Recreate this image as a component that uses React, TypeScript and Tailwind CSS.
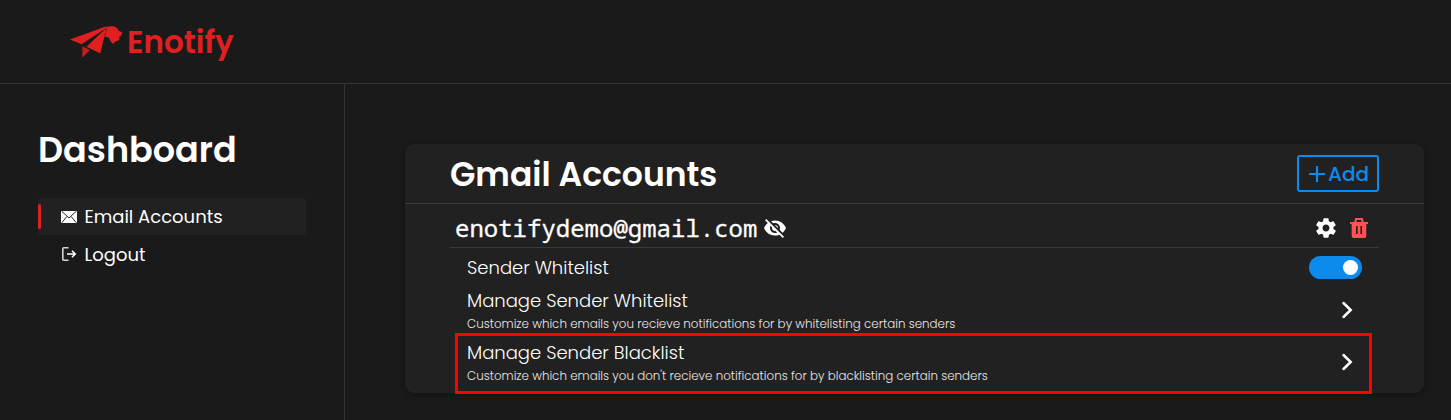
import { MdVisibilityOff } from "react-icons/md";
import { IoMdSettings } from "react-icons/io";

function Logo() {
  return (
    <svg width="53" height="33" viewBox="0 0 53 33" fill="#e02020" aria-hidden="true">
      <path d="M0 13.5 35 .8 38 1 11.5 18.3Z" />
      <path d="M12.3 20.3v11.5L19.8 24Z" opacity=".85" />
      <path d="M16.5 20.8 35 3 38 .6 44 .3 47 2 49 5 52.3 6.2 51.4 9.6 49.2 11 49.4 14 45.5 15.5 43 18 40.8 15.5 39 12 36.5 10.5 34.3 11 30.3 27.5Z" />
      <path d="m13.5 20 22.5-17.5M34.3 10.5 37 2.5" fill="none" stroke="#1a1a1a" strokeWidth=".5" />
    </svg>
  );
}

function MailIcon() {
  return (
    <svg width="16" height="12" viewBox="0 0 16 12" aria-hidden="true">
      <rect width="16" height="12" rx="1" fill="#fff" />
      <path d="m1 .5 7 6.5 7-6.5M1 11.5l4.8-6M15 11.5l-4.8-6" fill="none" stroke="#212121" />
    </svg>
  );
}

function LogoutIcon() {
  return (
    <svg width="16" height="16" viewBox="0 0 16 16" fill="none" stroke="#fff" strokeWidth="1.6" aria-hidden="true">
      <path d="M7.5 1.8H2.8q-1 0-1 1v10.4q0 1 1 1h4.7" stroke="#d4d4d4" />
      <path d="M6 8h8M11 4.8 14.2 8 11 11.2" />
    </svg>
  );
}

function TrashIcon() {
  return (
    <svg width="18" height="20" viewBox="0 0 18 20" aria-hidden="true">
      <path d="M5.3 4.5 6 1h6l.7 3.5" fill="none" stroke="#ff5252" strokeWidth="2" strokeLinejoin="round" />
      <path fillRule="evenodd" fill="#ff5252" d="M0 4h18v2h-1.7v12q0 2-2 2H3.7q-2 0-2-2V6H0ZM6 8v8h1.7V8Zm4.4 0v8H12V8Z" />
    </svg>
  );
}

function Chevron() {
  return (
    <svg width="12" height="18" viewBox="0 0 12 18" fill="none" stroke="#fff" strokeWidth="2.5" strokeLinecap="round" aria-hidden="true">
      <path d="m2.5 2 7.2 7-7.2 7" />
    </svg>
  );
}

export default function App() {
  return (
    <div className="flex h-[420px] flex-col overflow-hidden bg-[#1a1a1a] font-['Poppins','Inter',sans-serif] text-white">
      <header className="flex h-[84px] shrink-0 items-center gap-1 border-b border-[#333] pl-[70px] pt-0.5">
        <Logo />
        <span className="whitespace-nowrap text-[31px] font-semibold text-[#e02020]">Enotify</span>
      </header>
      <div className="flex flex-1">
        <aside className="flex w-[345px] shrink-0 flex-col border-r border-[#333] pl-[38px] pt-[39px]">
          <h1 className="h-[75px] whitespace-nowrap text-[35px] leading-[54px] font-semibold">Dashboard</h1>
          <nav className="w-[268px] text-[18px]">
            <a className="flex h-[37px] items-center rounded-[3px] bg-[#212121]">
              <span className="mr-5 h-[25px] w-[3px] rounded-xs bg-[#e02020]" />
              <MailIcon />
              <span className="ml-[7.5px] whitespace-nowrap">Email Accounts</span>
            </a>
            <a className="flex h-[38px] items-center pl-[23px]">
              <LogoutIcon />
              <span className="ml-[7.5px] whitespace-nowrap">Logout</span>
            </a>
          </nav>
        </aside>
        <main className="flex-1 pl-[60px] pr-[27px] pt-[60px]">
          <section className="flex h-[249px] flex-col rounded-[9px] bg-[#212121] shadow-[0_2px_6px_rgba(0,0,0,0.3)]">
            <div className="flex h-[60px] shrink-0 items-center justify-between border-b border-[#3a3a3a] pl-[45px] pr-[45px]">
              <h2 className="whitespace-nowrap pt-0.5 text-[33px] font-semibold">Gmail Accounts</h2>
              <button className="flex h-[37px] w-[82px] items-center gap-[3px] rounded-[3px] border-2 border-[#0d8bec] pl-2.5 text-[20px] font-medium text-[#0d8bec]">
                <svg width="16" height="16" viewBox="0 0 16 16" stroke="currentColor" strokeWidth="2.2"><path d="M8 0v16M0 8h16" /></svg>
                <span>Add</span>
              </button>
            </div>
            <div className="mx-[45px] flex h-[44px] shrink-0 items-center border-b border-[#3a3a3a] pl-[5px] pt-1">
              <span className="whitespace-nowrap font-['Noto_Sans_Mono','DejaVu_Sans_Mono',monospace] text-[24px] leading-8 [-webkit-text-stroke:0.3px_white]">enotifydemo@gmail.com</span>
              <MdVisibilityOff className="ml-[6px] size-6" />
              <IoMdSettings className="ml-auto mr-3 size-6" />
              <span className="mr-[11px]"><TrashIcon /></span>
            </div>
            <div className="flex h-[38px] shrink-0 items-center justify-between pl-[62px] pr-[62px] text-[18px] font-light">
              <span className="whitespace-nowrap">Sender Whitelist</span>
              <span className="flex h-[23px] w-[53px] items-center justify-end rounded-full bg-[#0d8bec] pr-1">
                <span className="size-[15px] rounded-full bg-white" />
              </span>
            </div>
            <div className="flex h-[47px] shrink-0 items-center justify-between pl-[62px] pr-[71px]">
              <div>
                <div className="whitespace-nowrap text-[18px] leading-7 font-light">Manage Sender Whitelist</div>
                <div className="whitespace-nowrap text-[11.86px] leading-[18px] font-light text-[#e8e8e8]">Customize which emails you recieve notifications for by whitelisting certain senders</div>
              </div>
              <Chevron />
            </div>
            <div className="ml-[50px] mr-[52px] flex h-[61px] shrink-0 items-center justify-between border-3 border-[#ff0000] pb-1 pl-[9px] pr-4">
              <div>
                <div className="whitespace-nowrap text-[18px] leading-7 font-light">Manage Sender Blacklist</div>
                <div className="whitespace-nowrap text-[11.86px] leading-[18px] font-light text-[#e8e8e8]">Customize which emails you don't recieve notifications for by blacklisting certain senders</div>
              </div>
              <Chevron />
            </div>
          </section>
        </main>
      </div>
    </div>
  );
}
